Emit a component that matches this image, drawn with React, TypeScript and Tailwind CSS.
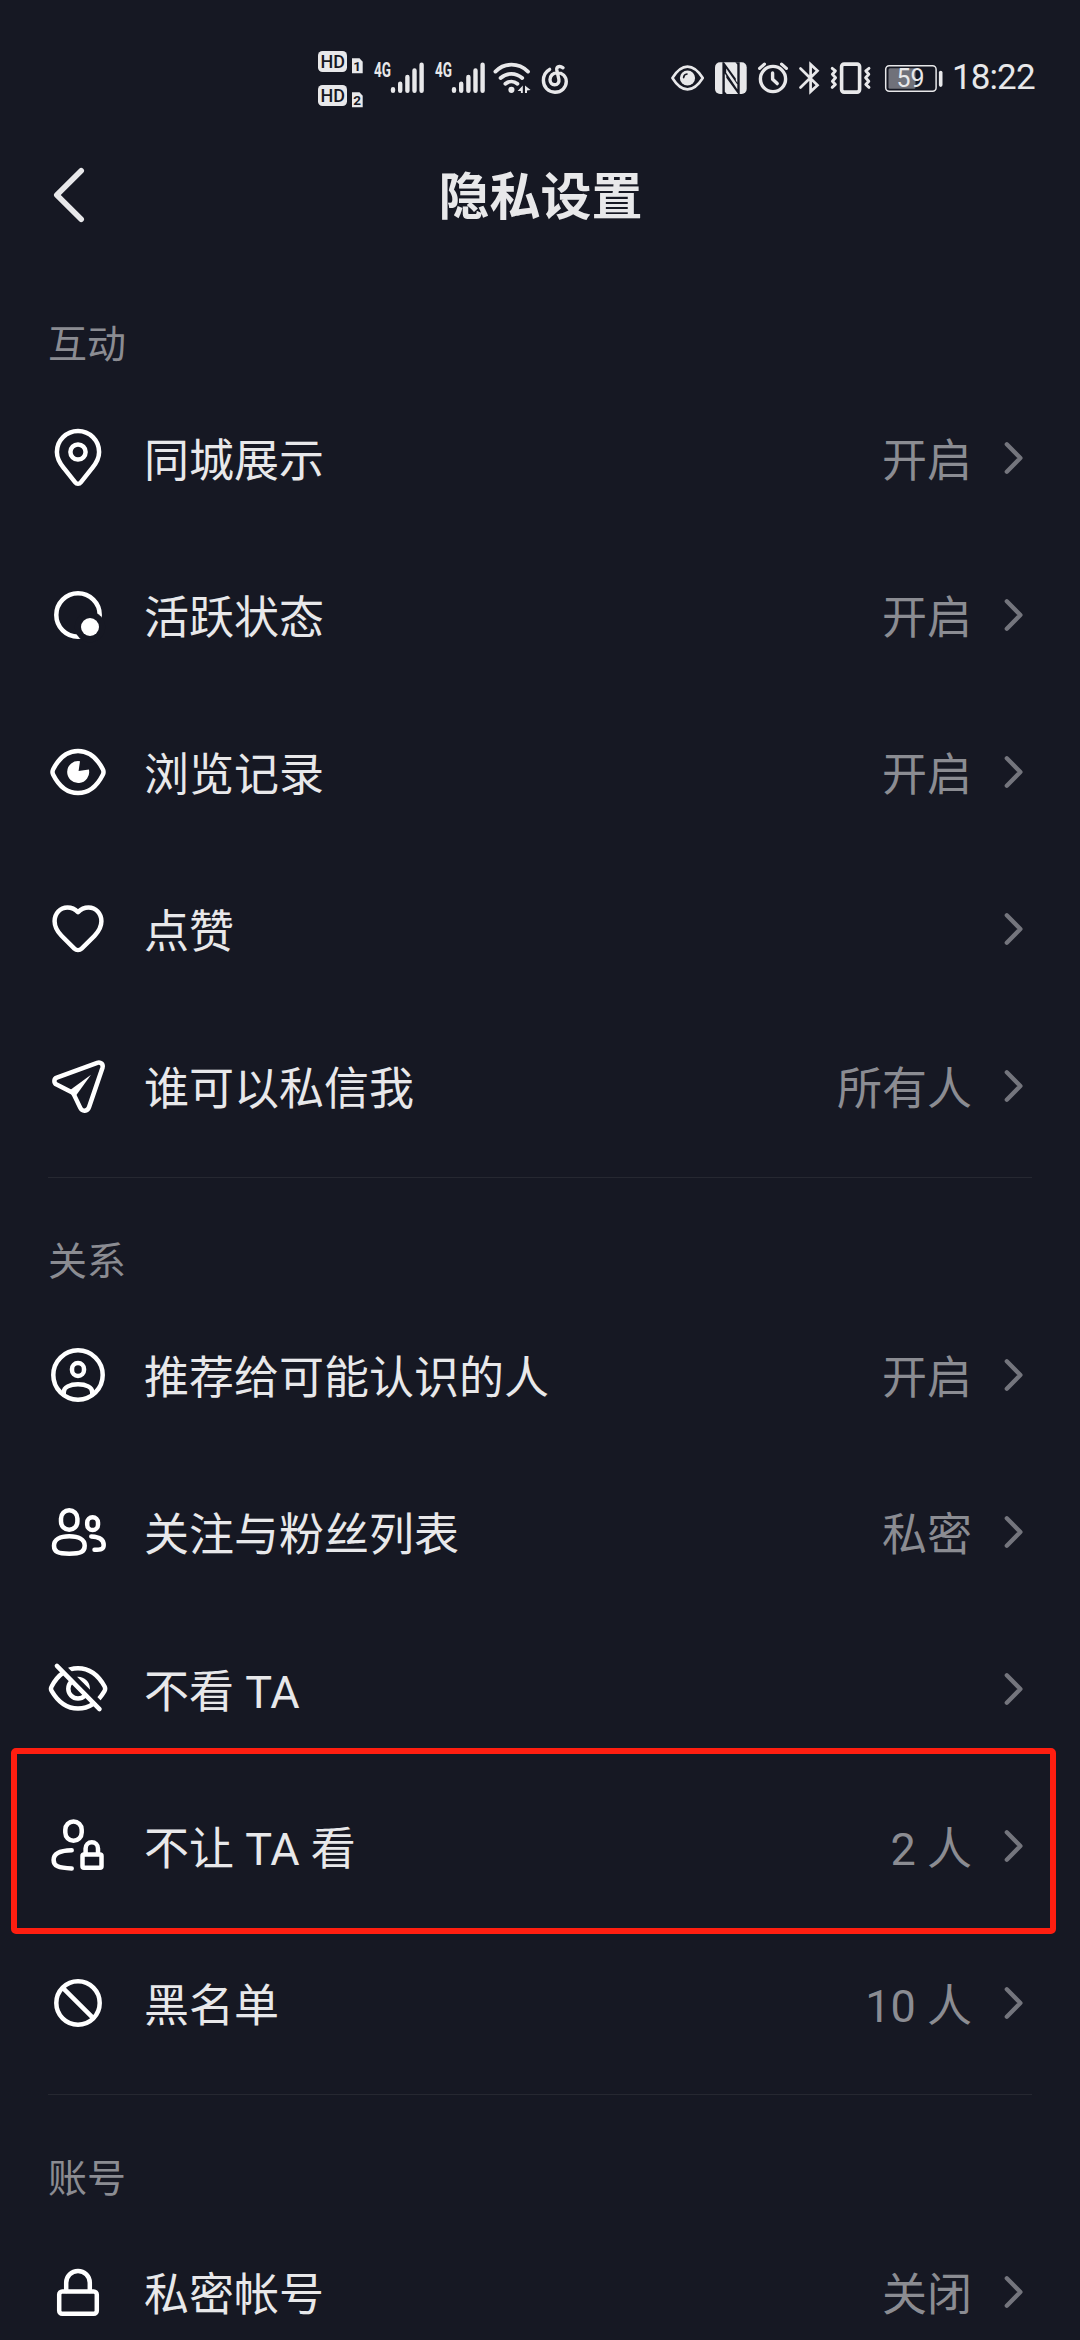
import type { ReactNode } from "react";

const BG = "#161823";
const FG = "#e8e8ea";

function Glyph({ children }: { children: ReactNode }) {
  return (
    <svg
      className="h-[60px] w-[60px] shrink-0"
      viewBox="0 0 60 60"
      fill="none"
      stroke="#fff"
      strokeWidth="4.5"
      strokeLinecap="round"
      strokeLinejoin="round"
    >
      {children}
    </svg>
  );
}

const icons: Record<string, ReactNode> = {
  pin: (
    <>
      <path d="M8.9 24a21.1 21.1 0 0 1 42.2 0c0 7-3.2 11.8-7.2 16.4L32.8 54.3c-1.5 1.9-4.1 1.9-5.6 0L16.1 40.4C12.1 35.8 8.9 31 8.9 24z" />
      <circle cx="30" cy="24" r="7.6" />
    </>
  ),
  active: (
    <>
      <circle cx="30" cy="30" r="21.7" />
      <circle cx="42" cy="42" r="15.2" fill={BG} stroke="none" />
      <circle cx="42" cy="42" r="9" fill="#fff" stroke="none" />
    </>
  ),
  eye: (
    <>
      <path d="M5.2 27.3C10.5 16.8 19 9 30 9s19.5 7.8 24.8 18.3c.9 1.7.9 3.7 0 5.4C49.5 43.2 41 51 30 51S10.5 43.2 5.2 32.7c-.9-1.7-.9-3.7 0-5.4z" />
      <path d="M32 19.2A11 11 0 1 0 40.9 27.6L30.6 28.9z" fill="#fff" stroke="none" />
    </>
  ),
  heart: (
    <path d="M30 13.2C26.8 9.9 23.2 8.6 19.5 8.6 12 8.6 6.6 14.6 6.6 22.3c0 5.7 2.8 10.3 6.9 14.5l12.9 12.8c2 1.9 5.2 1.9 7.2 0l12.9-12.8c4.1-4.2 6.9-8.8 6.9-14.5 0-7.7-5.4-13.7-12.9-13.7-3.7 0-7.3 1.3-10.5 4.6z" />
  ),
  plane: (
    <>
      <path d="M8.8 21.6 49.2 6.8c3.4-1.2 6.3 1.5 5.3 4.9L41 51.3c-1.4 4.2-6.8 4.6-8.7.6L26.4 39.6c-.6-1.3-1.2-2.6-2.6-3.3L8.6 28.6c-3-1.6-3-5.8.2-7z" />
      <path d="M43 18.7 21.5 34.6l6 5.6z" fill="#fff" stroke="none" />
    </>
  ),
  profile: (
    <>
      <circle cx="30" cy="30" r="24.7" />
      <rect x="24" y="18" width="12" height="13" rx="6" />
      <path d="M15.8 48.5v-1.6c0-4.6 6-7.6 14.2-7.6s14.2 3 14.2 7.6v1.6" />
    </>
  ),
  people: (
    <>
      <rect x="13" y="8.3" width="16.4" height="19.5" rx="8.2" />
      <path d="M6 43.7c0-6.2 6-9.4 15.3-9.4s15.4 3.2 15.4 9.4c0 6.2-4 8-15.4 8S6 49.9 6 43.7z" />
      <rect x="39.2" y="15.2" width="10.8" height="12.9" rx="5.4" />
      <path d="M43.3 34.4c7.6.3 12.4 3.1 12.4 8.7 0 4-2.6 4.7-9.2 4.7" />
    </>
  ),
  eyeOff: (
    <>
      <path d="M3.6 27.5C9.5 16.5 18.5 9.3 30 9.3s20.5 7.2 26.6 18.2c.7 1.4.7 2.9 0 4.3C50.5 42.3 41.5 49.5 30 49.5S9.7 42.3 3.6 31.8c-.8-1.4-.8-2.9 0-4.3z" />
      <circle cx="30" cy="29.7" r="9.7" />
      <path d="M8 .2 58 50.2" stroke={BG} strokeWidth="5" strokeLinecap="butt" />
      <path d="M8.9 6.9 51.5 50.2" />
    </>
  ),
  personLock: (
    <>
      <rect x="17.3" y="5.5" width="16.4" height="19.2" rx="8.2" />
      <path d="M23.7 34.3C13 34.5 5.6 37.5 5.6 44c0 6 4.5 8 18.1 8.4" />
      <rect x="34.5" y="38.5" width="19" height="13.3" rx="1.5" />
      <path d="M37.6 38v-5.5a6.2 6.2 0 0 1 12.4 0V38" />
    </>
  ),
  block: (
    <>
      <circle cx="30" cy="30" r="21.7" />
      <path d="m14.8 14.8 30.4 30.4" />
    </>
  ),
  lock: (
    <>
      <rect x="11.2" y="29.5" width="37.6" height="22.3" rx="3" />
      <path d="M18.2 29v-8.2a11.8 11.8 0 0 1 23.6 0V29" />
    </>
  ),
};

type Item = { icon: string; label: string; value?: string; marked?: boolean };

const sections: { title: string; items: Item[] }[] = [
  {
    title: "互动",
    items: [
      { icon: "pin", label: "同城展示", value: "开启" },
      { icon: "active", label: "活跃状态", value: "开启" },
      { icon: "eye", label: "浏览记录", value: "开启" },
      { icon: "heart", label: "点赞" },
      { icon: "plane", label: "谁可以私信我", value: "所有人" },
    ],
  },
  {
    title: "关系",
    items: [
      { icon: "profile", label: "推荐给可能认识的人", value: "开启" },
      { icon: "people", label: "关注与粉丝列表", value: "私密" },
      { icon: "eyeOff", label: "不看 TA" },
      { icon: "personLock", label: "不让 TA 看", value: "2 人", marked: true },
      { icon: "block", label: "黑名单", value: "10 人" },
    ],
  },
  {
    title: "账号",
    items: [{ icon: "lock", label: "私密帐号", value: "关闭" }],
  },
];

function Row({ item }: { item: Item }) {
  return (
    <div className="relative flex h-[157px] shrink-0 items-center pr-14 pl-12">
      <Glyph>{icons[item.icon]}</Glyph>
      <span className="ml-9 flex-1 pt-[7px] text-[45px] leading-[60px] text-[#e8e8ea]">{item.label}</span>
      {item.value && <span className="pt-[7px] text-[45px] leading-[60px] text-[#8b8c92]">{item.value}</span>}
      <svg
        className="ml-8 h-[34px] w-5 shrink-0"
        viewBox="0 0 20 34"
        fill="none"
        stroke="#74757d"
        strokeWidth="4.3"
        strokeLinecap="round"
        strokeLinejoin="round"
      >
        <path d="m2.8 3.2 13.6 13.8L2.8 30.8" />
      </svg>
      {item.marked && (
        <div className="absolute top-[-19.5px] right-6 left-[11px] h-[186px] rounded-[5px] border-6 border-[#ff1e10]" />
      )}
    </div>
  );
}

/* Every status icon shares the same 60px band, so x and y below are screen units. */
function StatusIcon({ x, w, children }: { x: number; w: number; children: ReactNode }) {
  return (
    <svg
      className="shrink-0"
      width={w}
      height={60}
      viewBox={`${x} 48 ${w} 60`}
      fill="none"
      stroke={FG}
      strokeLinecap="round"
      strokeLinejoin="round"
      fontFamily="Roboto, sans-serif"
    >
      {children}
    </svg>
  );
}

function SimBadge({ y, n }: { y: number; n: string }) {
  return (
    <>
      <rect x="318" y={y} width="29" height="21" rx="4.5" fill={FG} stroke="none" />
      <text x="320.5" y={y + 17.2} fontSize="19" fontWeight="500" textLength="24.5" lengthAdjust="spacingAndGlyphs" fill={BG} stroke="none">
        HD
      </text>
      <path d={`M352 ${y + 7.3}h7.5l3.2 3.5v11.4h-10.7z`} fill={FG} stroke="none" />
      <text x="357.2" y={y + 19.8} fontSize="13.5" fontWeight="700" textAnchor="middle" fill={BG} stroke="none">
        {n}
      </text>
    </>
  );
}

function Signal({ x }: { x: number }) {
  return (
    <StatusIcon x={x} w={61}>
      <text x={x + 4} y="76.6" fontSize="19.5" fontWeight="700" textLength="17" lengthAdjust="spacingAndGlyphs" fill={FG} stroke="none">
        4G
      </text>
      <path
        strokeWidth="4.4"
        d={`M${x + 23} 89.2v1.6M${x + 30.2} 83.8v7M${x + 37.4} 77v13.8M${x + 44.5} 70.4v20.4M${x + 51.6} 64.8v26`}
      />
    </StatusIcon>
  );
}

function StatusBar() {
  return (
    <div className="flex h-[156px] shrink-0 items-start pt-12 pl-[315px]">
      <StatusIcon x={315} w={55}>
        <SimBadge y={51} n="1" />
        <SimBadge y={85} n="2" />
      </StatusIcon>
      <Signal x={370} />
      <Signal x={431} />
      <StatusIcon x={492} w={44}>
        <circle cx="511.4" cy="89.8" r="3.1" fill={FG} stroke="none" />
        <path strokeWidth="3.8" d="M495.4 71.6c9-9.2 23-9.2 32.6 0M500.6 78c6.4-5.6 15.2-5.6 21.6 0M505.4 83.8c3.6-3 8.4-3 12 0" />
        <path fill={FG} stroke="none" d="M522.8 85.5v7.6h-1.9v-2.2h-3.3zM525 85.5l5.6 4.6-3.6.3v2.7h-2z" />
      </StatusIcon>
      <StatusIcon x={536} w={132}>
        <path
          strokeWidth="3.4"
          d="M549.6 69.4c-4 2.2-6.2 6.6-6.2 11.2 0 6.6 5.2 11.6 11.600 11.600s11.300-4.600 11.300-10.600c0-5.200-4-9-9-9-4.400 0-7.300 3.400-7.300 6.900 0 3.300 2 5.300 4.600 5.300 3 0 4.800-2.400 4.300-5.300l-2.100-9.400c-.6-3.600 3.200-4.600 6.200-2.300"
        />
      </StatusIcon>
      <StatusIcon x={668} w={42}>
        <path strokeWidth="2.6" d="M672.4 78c4.200-6.800 9.500-11.400 15.100-11.400s11 4.600 15.300 11.400c-4.300 6.800-9.700 11.400-15.300 11.400S676.600 84.800 672.400 78z" />
        <circle cx="687.5" cy="78" r="7.6" fill={FG} stroke="none" />
        <path stroke={BG} strokeWidth="1.6" d="M683.600 77.600c.2-2 1.500-3.400 3.400-3.600" />
      </StatusIcon>
      <StatusIcon x={710} w={42}>
        <rect x="715" y="62.3" width="31.7" height="31.7" rx="5" fill={FG} stroke="none" />
        <path fill={BG} stroke="none" d="M722.4 62.300h1.600l11.800 16.200v11.700L724.800 73.600v18.100l2 2.300h-4.400zM739.700 94h-1.600l-11.800-16.200V66.100l11 16.600V64.600l-2-2.300h4.400z" />
        <path fill={FG} stroke="none" d="M726.200 68.500 737.300 84.500v4.700L726.200 72.800z" />
      </StatusIcon>
      <StatusIcon x={752} w={42}>
        <circle cx="773" cy="79" r="12.6" strokeWidth="3.4" />
        <path strokeWidth="3.4" d="M772.6 73v6.2l4.600 4.400" />
        <path strokeWidth="3.2" d="M759.600 68.400l4.800-4.300M786.400 68.400l-4.800-4.300" />
      </StatusIcon>
      <StatusIcon x={794} w={30}>
        <path strokeWidth="2.7" strokeLinejoin="miter" d="M800.500 68.500 817.500 85.300 810.600 91.600V64.400L817.500 70.700 800.500 87.500" />
      </StatusIcon>
      <StatusIcon x={824} w={54}>
        <rect x="841.6" y="64.1" width="18" height="28" rx="2.5" strokeWidth="3.6" />
        <path strokeWidth="2.9" d="M832.200 68.300l3.200 2.600-3 3.300 3.200 3.500-3.200 3.500 3 3.300-3.200 2.900M869 68.300l-3.200 2.600 3 3.300-3.200 3.500 3.200 3.500-3 3.300 3.200 2.900" />
      </StatusIcon>
      <StatusIcon x={878} w={73}>
        <rect x="885.7" y="65.7" width="50.4" height="25.6" rx="3.5" strokeWidth="1.5" />
        <rect x="888.5" y="68.3" width="27" height="20.4" rx="1.5" fill="#70717a" stroke="none" />
        <path strokeWidth="3.6" d="M940.700 72.500v12.600" />
        <text x="896.5" y="87.2" fontSize="25.5" textLength="28" lengthAdjust="spacingAndGlyphs" fill={FG} stroke="none">
          59
        </text>
      </StatusIcon>
      <span className="pt-[9px] pl-px font-[Roboto,sans-serif] text-[35px] leading-[42px] tracking-[-0.9px] whitespace-nowrap text-[#e8e8ea]">
        18:22
      </span>
    </div>
  );
}

export default function App() {
  return (
    <div className="flex h-[2340px] w-[1080px] flex-col overflow-hidden bg-[#161823] font-[Roboto,'Noto_Sans_CJK_SC',sans-serif]">
      <StatusBar />
      <header className="grid h-[78px] shrink-0 grid-cols-[1fr_auto_1fr] items-center px-12">
        <svg
          className="h-[60px] w-10"
          viewBox="0 0 40 60"
          fill="none"
          stroke={FG}
          strokeWidth="5.6"
          strokeLinecap="round"
          strokeLinejoin="round"
        >
          <path d="M33.200 5.800 8.800 30l24.400 24.200" />
        </svg>
        <h1 className="pt-[6px] pl-px text-[51px] leading-[60px] font-bold text-[#e8e8ea]">隐私设置</h1>
      </header>
      <main className="flex flex-col pt-[13.5px]">
        {sections.map((section, index) => (
          <section key={section.title} className="flex flex-col">
            <div className="flex h-[132px] flex-col px-12 pt-3">
              <div className={index === 0 ? "h-px" : "h-px bg-[#262831]"} />
              <h2 className="mt-[58px] text-[39px] leading-[52px] text-[#8b8c92]">{section.title}</h2>
            </div>
            {section.items.map((item) => (
              <Row key={item.label} item={item} />
            ))}
          </section>
        ))}
      </main>
    </div>
  );
}
